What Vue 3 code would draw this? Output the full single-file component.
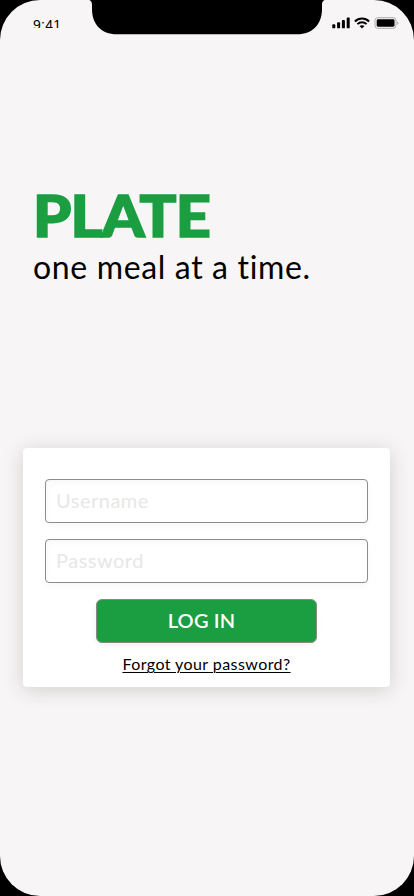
<script setup>
import { ref } from 'vue'

const username = ref('')
const password = ref('')
</script>

<template>
  <div class="device">
    <main class="screen">
      <header class="status">
        <span class="time">9:41</span>
        <svg class="notch" width="238" height="35" viewBox="0 0 238 35">
          <path d="M0 0C3 0 4 2 4 5V9C4 24 13 34.3 29 34.3H209C225 34.3 234 24 234 9V5C234 2 235 0 238 0Z" />
        </svg>
        <div class="indicators">
          <svg width="18" height="12" viewBox="0 0 18 12">
            <rect x=".3" y="7.3" width="3" height="4" rx=".9" />
            <rect x="5.1" y="5.3" width="3" height="6" rx=".9" />
            <rect x="9.9" y="3" width="3" height="8.3" rx=".9" />
            <rect x="14.7" y=".5" width="3" height="10.8" rx=".9" />
          </svg>
          <svg width="16" height="12" viewBox="0 0 16 12">
            <g fill="none" stroke="#000" stroke-width="2">
              <path d="M.9 4.5C4.9.6 11.1.6 15.1 4.5" />
              <path d="M3.4 7.1C6 4.6 10 4.6 12.6 7.1" />
            </g>
            <path d="M5.5 9.1C6.9 7.8 9.1 7.8 10.5 9.1L8 11.6Z" />
          </svg>
          <svg width="25" height="12" viewBox="0 0 25 12">
            <rect x="1" y=".7" width="21" height="10.6" rx="2.8" fill="none" stroke="#aaa9aa" />
            <rect x="2.7" y="2.3" width="17.8" height="7.4" rx="1.4" />
            <path d="M23.4 4.2C24.7 4.7 24.7 7.3 23.4 7.8Z" fill="#999899" />
          </svg>
        </div>
      </header>

      <section class="brand">
        <h1>PLATE</h1>
        <p>one meal at a time.</p>
      </section>

      <form class="card" @submit.prevent>
        <input v-model="username" class="field" type="text" placeholder="Username" />
        <input v-model="password" class="field" type="password" placeholder="Password" />
        <button class="login" type="submit">LOG IN</button>
        <a class="forgot">Forgot your password?</a>
      </form>
    </main>
  </div>
</template>

<style>
body {
  background: #000;
}
</style>

<style scoped>
.device {
  width: 414px;
  height: 896px;
  background: #000;
  font-family: Lato, sans-serif;
  color: #000;
}
.screen {
  height: 896px;
  box-sizing: border-box;
  border-radius: 40px;
  background: #f7f5f6;
  overflow: hidden;
}
.status {
  display: grid;
  grid-template-columns: 88px 238px 88px;
  height: 35px;
}
.time {
  height: 11px;
  margin: 17px 0 0 33px;
  overflow: hidden;
  font: 14px/16px "Liberation Sans", sans-serif;
  letter-spacing: 0.3px;
}
.indicators {
  display: flex;
  gap: 4px;
  padding: 17px 0 0 6px;
}
.brand {
  padding: 147px 0 0 33px;
}
h1 {
  margin: 0;
  font-size: 57.5px;
  line-height: 66px;
  font-weight: 900;
  letter-spacing: -0.7px;
  color: #1b9e41;
  -webkit-text-stroke: 1.6px #1b9e41;
  transform: scaleX(1.063);
  transform-origin: 0 50%;
}
.brand p {
  margin: 0;
  font-size: 32px;
  line-height: 38px;
  letter-spacing: 0.65px;
  white-space: nowrap;
}
.card {
  display: flex;
  flex-direction: column;
  align-items: center;
  box-sizing: border-box;
  width: 367px;
  height: 239px;
  margin: 162px 0 0 23px;
  padding-top: 31px;
  border-radius: 4px;
  background: #fff;
  box-shadow: 0 3px 20px rgba(50, 40, 20, 0.18);
}
.field {
  box-sizing: border-box;
  width: 323px;
  height: 44px;
  margin: 0 0 16px;
  padding: 0 10px 2px;
  border: 1px solid #8d8d8d;
  border-radius: 4px;
  background: #fff;
  box-shadow: 0 3px 6px rgba(0, 0, 0, 0.03), inset 0 3px 6px rgba(0, 0, 0, 0.03);
  font: 20px Lato, sans-serif;
  letter-spacing: 0.5px;
  outline: none;
}
.field::placeholder {
  color: #e7e7e7;
  opacity: 1;
}
.login {
  box-sizing: border-box;
  width: 221px;
  height: 44px;
  padding: 0 10px 2px 0;
  border: 1px solid #858b85;
  border-radius: 6px;
  background: #1b9e41;
  box-shadow: 0 3px 6px rgba(0, 0, 0, 0.05);
  color: #fff;
  font: 600 20px/40px Lato, sans-serif;
  letter-spacing: 0.2px;
}
.forgot {
  margin-top: 11px;
  font-size: 16px;
  line-height: 20px;
  letter-spacing: 0.43px;
  text-decoration: underline;
  text-decoration-thickness: 1px;
  text-underline-offset: 2px;
}
</style>
